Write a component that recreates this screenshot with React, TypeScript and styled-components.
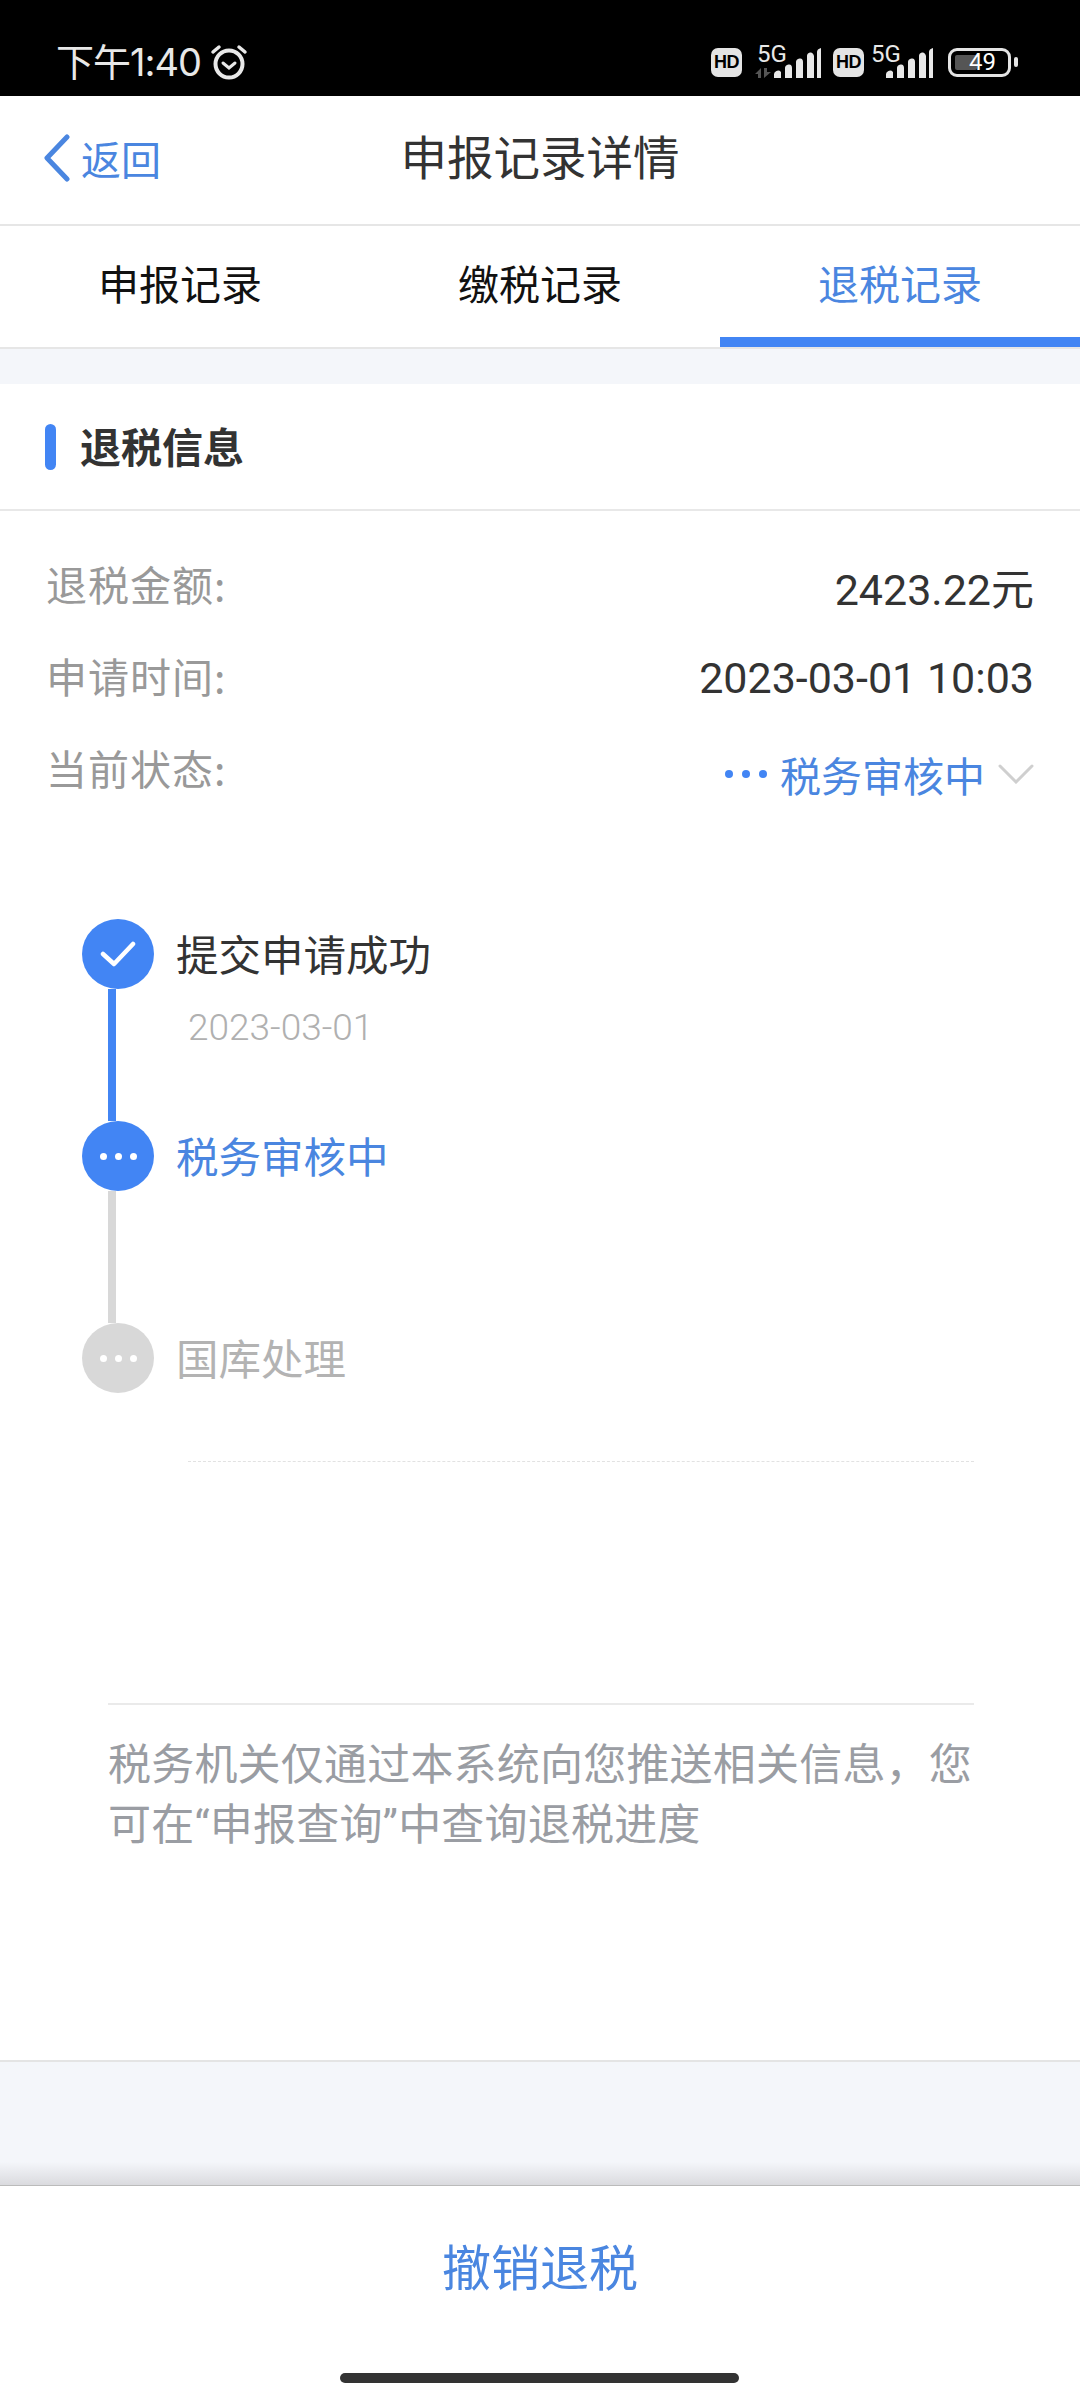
import React from "react";
import styled, { createGlobalStyle } from "styled-components";

const blue = "#4a86e0";
const solid = "#4285f4";
const cjk = `"Noto Sans CJK SC", sans-serif`;
const num = `Roboto, "Noto Sans CJK SC", sans-serif`;

const Global = createGlobalStyle`
  html, body { margin: 0; padding: 0; background: #fff; }
  body { font-family: ${cjk}; }
  * { box-sizing: border-box; }
`;

const Page = styled.div`
  width: 1080px; height: 2400px; display: flex; flex-direction: column; background: #fff; overflow: hidden;
`;
const StatusBar = styled.div`
  height: 96px; background: #000; color: #e8e8e8; display: flex; justify-content: space-between;
  padding: 42px 62px 0 56px; flex: none;
`;
const StatusLeft = styled.div`
  display: flex; align-items: center; gap: 9px; height: 40px; font-family: Inter, ${cjk}; font-size: 38px; line-height: 40px; letter-spacing: -1px;
`;
const StatusRight = styled.div`
  display: flex; align-items: flex-start; height: 40px;
`;
const HdBadge = styled.span`
  width: 31px; height: 29px; border-radius: 7px; background: #e4e4e4; color: #000; margin-top: 6px;
  font: 800 18px/29px "Liberation Sans", sans-serif; text-align: center; letter-spacing: -0.5px;
`;
const Signal = styled.div<{ $w: number; $gap: number; $after: number }>`
  position: relative; width: ${p => p.$w}px; height: 36px; margin: 0 ${p => p.$after}px 0 ${p => p.$gap}px;
`;
const FiveG = styled.span`
  position: absolute; left: 0; top: 1px; font: 400 24px/22px "Roboto", sans-serif; color: #e8e8e8;
`;
const SignalSvg = styled.svg`
  position: absolute; right: 0; top: 6px;
`;
const DataArrows = styled.svg`
  position: absolute; left: -2px; bottom: 0;
`;
const Battery = styled.div`
  position: relative; width: 63px; height: 29px; margin-top: 6px; border: 3px solid #e4e4e4; border-radius: 9px;
  font: 400 24px/23px "Roboto", sans-serif; color: #fff; text-align: center; padding-left: 6px;
`;
const BatteryFill = styled.span`
  position: absolute; left: 4px; top: 4px; bottom: 4px; width: 22px; background: #555; border-radius: 2px;
`;
const BatteryValue = styled.span`
  position: relative;
`;
const BatteryTip = styled.span`
  width: 4px; height: 10px; margin: 15px 0 0 3px; background: #e4e4e4; border-radius: 2px;
`;

const NavBar = styled.div`
  height: 130px; flex: none; display: grid; grid-template-columns: 1fr auto 1fr; align-items: center;
  border-bottom: 2px solid #e6e6e6; padding-left: 44px;
`;
const BackLink = styled.div`
  display: flex; align-items: center; gap: 11px; color: ${blue}; font-size: 40px; line-height: 50px; margin-top: -4px;
`;
const Title = styled.div`
  font-size: 46.5px; line-height: 60px; color: #333; margin: -10px 0 0 -44px;
`;
const Tabs = styled.div`
  height: 123px; flex: none; display: grid; grid-template-columns: repeat(3, 1fr); border-bottom: 2px solid #e6e6e6;
`;
const Tab = styled.div<{ $active?: boolean }>`
  display: flex; align-items: center; justify-content: center; font-size: 41px;
  color: ${p => (p.$active ? blue : "#111")};
  border-bottom: 10px solid ${p => (p.$active ? solid : "transparent")};
`;
const Band = styled.div`
  height: 35px; flex: none; background: #f4f6fa;
`;
const SectionHead = styled.div`
  height: 127px; flex: none; display: flex; align-items: center; gap: 24px; padding-left: 45px; border-bottom: 2px solid #e8e8e8;
`;
const SectionMark = styled.span`
  width: 11px; height: 46px; border-radius: 6px; background: ${solid};
`;
const SectionTitle = styled.h2`
  margin: -3px 0 0; font-size: 41px; line-height: 50px; font-weight: 700; color: #333;
`;
const Main = styled.div`
  flex: 1; min-height: 0; display: flex; flex-direction: column;
`;
const InfoList = styled.div`
  padding: 29px 46px 0; flex: none;
`;
const InfoRow = styled.div`
  height: 92px; display: flex; justify-content: space-between; align-items: center;
`;
const InfoLabel = styled.span`
  font-size: 41px; color: #999; font-weight: 400; letter-spacing: 1px; margin-top: -6px;
`;
const InfoValue = styled.span`
  font-family: ${num}; font-size: 43px; font-weight: 400; color: #333; margin-top: -1px;
`;
const StatusValue = styled.div`
  display: flex; align-items: center; color: ${blue}; font-size: 41px; margin-top: 8px;
`;
const StatusText = styled.span`
  margin: 0 13px 0 13px;
`;
const Timeline = styled.div`
  padding: 103px 0 0 82px; flex: none;
`;
const Step = styled.div`
  height: 202px; display: flex;
`;
const LastStep = styled(Step)`
  height: 70px;
`;
const Rail = styled.div`
  width: 72px; display: flex; flex-direction: column; align-items: flex-start; flex: none;
`;
const Node = styled.div<{ $on?: boolean }>`
  width: 72px; height: 70px; border-radius: 50%; flex: none; display: flex; align-items: center; justify-content: center;
  background: ${p => (p.$on ? solid : "#d8d8d8")};
`;
const Connector = styled.div<{ $on?: boolean }>`
  width: 8px; flex: 1; margin-left: 26px; background: ${p => (p.$on ? solid : "#d8d8d8")};
`;
const StepBody = styled.div`
  margin-left: 22px;
`;
const StepTitle = styled.div<{ $tone: string }>`
  font-size: 42.5px; line-height: 60px; margin-top: 4px; color: ${p => p.$tone};
`;
const StepDate = styled.div`
  font-family: ${num}; font-weight: 300; font-size: 37px; line-height: 44px; margin: 23px 0 0 12px; color: #b0b0b0;
`;
const DashedRule = styled.div`
  height: 0; margin: 68px 106px 0 188px; border-top: 1px dashed #e2e2e2; flex: none;
`;
const Notice = styled.div`
  margin: 241px 106px 0 108px; border-top: 2px solid #eaeaea; padding-top: 30px; color: #9a9da3;
  font-family: Roboto, ${cjk}; font-size: 43px; line-height: 60px; letter-spacing: 0.2px; flex: none;
`;
const Spacer = styled.div`
  flex: 1;
`;
const BottomBand = styled.div`
  height: 125px; flex: none; background: #f4f6fa; border-top: 2px solid #e4e4e4;
  background-image: linear-gradient(to bottom, transparent 100px, #d8d8dc 125px);
`;
const BottomBar = styled.div`
  height: 215px; flex: none; background: #fff; border-top: 1px solid #bbb; position: relative; display: flex; justify-content: center; padding-top: 48px;
`;
const Revoke = styled.div`
  font-size: 49px; line-height: 62px; color: ${blue};
`;
const HomeBar = styled.div`
  position: absolute; left: 340px; bottom: 17px; width: 399px; height: 10px; border-radius: 5px; background: #333;
`;

const Bars = () => (
  <SignalSvg width="47" height="30" viewBox="0 0 47 30">
    <path d="M0 30v-3a4 4 0 0 1 7-3v6z M11 30V20q0-3 3.500-3.500T18 20v10z M22 30V14q0-3 3.500-3.500T29 14v16z M33 30V8q0-3 3-3.500T40 8v22z M43 30V4q0-3 4-4v30z" fill="#e8e8e8" />
  </SignalSvg>
);
const Dots = ({ color, gap, r }: { color: string; gap: number; r: number }) => (
  <svg width={gap * 2 + r * 2} height={r * 2} viewBox={`0 0 ${gap * 2 + r * 2} ${r * 2}`}>
    {[0, 1, 2].map(i => <circle key={i} cx={r + i * gap} cy={r} r={r} fill={color} />)}
  </svg>
);

export default function App() {
  return (
    <Page>
      <Global />
      <StatusBar>
        <StatusLeft>
          <span>下午1:40</span>
          <svg width="38" height="36" viewBox="0 0 38 36" fill="none" stroke="#e8e8e8" strokeLinecap="round">
            <circle cx="19" cy="20" r="13.500" strokeWidth="4" />
            <path d="M13 19l6 5 6-5" strokeWidth="3" />
            <path d="M3 8l6-5M35 8l-6-5" strokeWidth="3.500" />
          </svg>
        </StatusLeft>
        <StatusRight>
          <HdBadge>HD</HdBadge>
          <Signal $w={64} $gap={15} $after={12}>
            <FiveG>5G</FiveG>
            <DataArrows width="16" height="10" viewBox="0 0 16 10">
              <path d="M0 6l6-6v10H3V6zM9 0h3v4h4l-7 6z" fill="#555" />
            </DataArrows>
            <Bars />
          </Signal>
          <HdBadge>HD</HdBadge>
          <Signal $w={62} $gap={7} $after={15}><FiveG>5G</FiveG><Bars /></Signal>
          <Battery><BatteryFill /><BatteryValue>49</BatteryValue></Battery>
          <BatteryTip />
        </StatusRight>
      </StatusBar>
      <NavBar>
        <BackLink>
          <svg width="26" height="48" viewBox="0 0 26 48" fill="none" stroke={blue} strokeWidth="5" strokeLinecap="round" strokeLinejoin="round">
            <path d="M23 3L3 24l20 21" />
          </svg>
          <span>返回</span>
        </BackLink>
        <Title>申报记录详情</Title>
      </NavBar>
      <Tabs>
        <Tab>申报记录</Tab>
        <Tab>缴税记录</Tab>
        <Tab $active>退税记录</Tab>
      </Tabs>
      <Band />
      <SectionHead>
        <SectionMark />
        <SectionTitle>退税信息</SectionTitle>
      </SectionHead>
      <Main>
        <InfoList>
          <InfoRow><InfoLabel>退税金额:</InfoLabel><InfoValue>2423.22元</InfoValue></InfoRow>
          <InfoRow><InfoLabel>申请时间:</InfoLabel><InfoValue>2023-03-01 10:03</InfoValue></InfoRow>
          <InfoRow>
            <InfoLabel>当前状态:</InfoLabel>
            <StatusValue>
              <Dots color={solid} gap={17} r={4} />
              <StatusText>税务审核中</StatusText>
              <svg width="36" height="20" viewBox="0 0 36 20" fill="none" stroke="#cfcfcf" strokeWidth="3" strokeLinecap="round">
                <path d="M2 2l16 16L34 2" />
              </svg>
            </StatusValue>
          </InfoRow>
        </InfoList>
        <Timeline>
          <Step>
            <Rail>
              <Node $on>
                <svg width="36" height="26" viewBox="0 0 36 26" fill="none" stroke="#fff" strokeWidth="4.500" strokeLinecap="round" strokeLinejoin="round">
                  <path d="M3 13l11 10L33 3" />
                </svg>
              </Node>
              <Connector $on />
            </Rail>
            <StepBody>
              <StepTitle $tone="#333">提交申请成功</StepTitle>
              <StepDate>2023-03-01</StepDate>
            </StepBody>
          </Step>
          <Step>
            <Rail>
              <Node $on><Dots color="#fff" gap={15} r={3.500} /></Node>
              <Connector />
            </Rail>
            <StepBody><StepTitle $tone={blue}>税务审核中</StepTitle></StepBody>
          </Step>
          <LastStep>
            <Rail><Node><Dots color="#fff" gap={15} r={3.500} /></Node></Rail>
            <StepBody><StepTitle $tone="#b3b3b3">国库处理</StepTitle></StepBody>
          </LastStep>
        </Timeline>
        <DashedRule />
        <Notice>税务机关仅通过本系统向您推送相关信息，您可在“申报查询”中查询退税进度</Notice>
        <Spacer />
        <BottomBand />
        <BottomBar>
          <Revoke>撤销退税</Revoke>
          <HomeBar />
        </BottomBar>
      </Main>
    </Page>
  );
}
